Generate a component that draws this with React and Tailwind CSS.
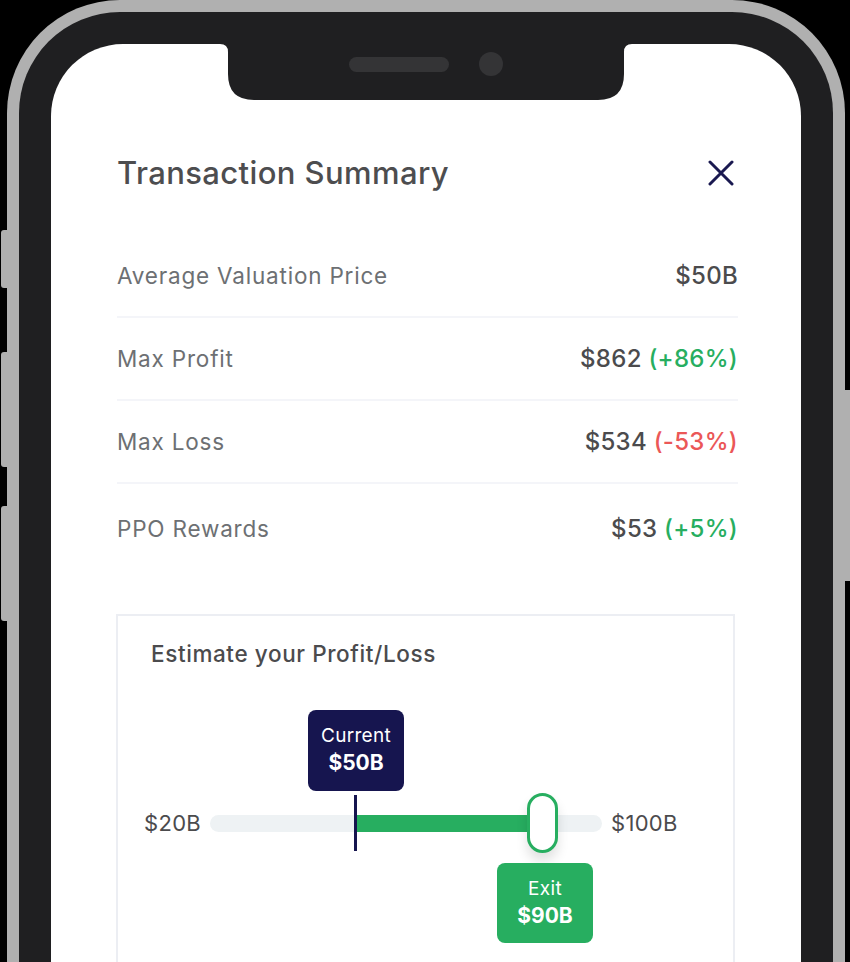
import React from 'react';

const rows = [
  { label: 'Average Valuation Price', value: '$50B' },
  { label: 'Max Profit', value: '$862', change: '(+86%)', up: true },
  { label: 'Max Loss', value: '$534', change: '(-53%)', up: false },
  { label: 'PPO Rewards', value: '$53', change: '(+5%)', up: true },
];

const SummaryRow = ({ label, value, change, up, last }) => (
  <div className={`flex items-center justify-between h-[83px] ${last ? 'pt-[6px]' : 'border-b-2 border-[#f4f5f9]'}`}>
    <span className="text-[22.5px] tracking-[0.8px] text-[#6d7073]">{label}</span>
    <span className="text-[24px] tracking-[0.3px] font-medium text-[#4b4b4d]">
      {value}
      {change && (
        <span className={up ? 'text-[#27ae60]' : 'text-[#eb5757]'}> {change}</span>
      )}
    </span>
  </div>
);

const ProfitSlider = () => (
  <div className="flex items-center h-[60px] ml-[26px]">
    <span className="w-[66px] text-[22px] tracking-[0.3px] text-[#4b4b4d]">$20B</span>
    <div className="relative flex items-center w-[392px] h-[17px] rounded-full bg-[#eef2f4]">
      {/* filled range from current to exit */}
      <div className="ml-[146px] h-[17px] w-[171px] bg-[#27ae60]" />
      <div className="w-[31px] h-[60px] shrink-0 rounded-full bg-white border-[3px] border-[#27ae60] shadow-[0_8px_12px_rgba(0,0,0,0.12)]" />

      {/* current marker + tooltip */}
      <div className="absolute left-[144px] top-[-20px] h-[56px] w-[3px] bg-[#16154f]" />
      <div className="absolute left-[98px] top-[-105px] w-[96px] h-[81px] rounded-[8px] bg-[#16154f] flex flex-col items-center justify-center text-white">
        <span className="text-[19px] tracking-[0.3px] leading-[26px]">Current</span>
        <span className="text-[21px] font-bold leading-[28px]">$50B</span>
      </div>

      {/* exit tooltip */}
      <div className="absolute left-[287px] top-[48px] w-[96px] h-[80px] rounded-[8px] bg-[#27ae60] flex flex-col items-center justify-center text-white">
        <span className="text-[19px] tracking-[0.3px] leading-[26px]">Exit</span>
        <span className="text-[21px] font-bold leading-[28px]">$90B</span>
      </div>
    </div>
    <span className="ml-[9px] text-[22px] tracking-[0.3px] text-[#4b4b4d]">$100B</span>
  </div>
);

export default function App() {
  return (
    <div className="relative w-[850px] h-[962px] overflow-hidden bg-black" style={{ fontFamily: 'Inter, "Noto Sans", sans-serif' }}>
      {/* side buttons */}
      <div className="absolute left-[1px] top-[230px] w-[10px] h-[58px] rounded-l-[3px] bg-[#b0b0b0]" />
      <div className="absolute left-[1px] top-[352px] w-[10px] h-[115px] rounded-l-[3px] bg-[#b0b0b0]" />
      <div className="absolute left-[1px] top-[506px] w-[10px] h-[115px] rounded-l-[3px] bg-[#b0b0b0]" />
      <div className="absolute right-0 top-[390px] w-[10px] h-[191px] bg-[#b0b0b0]" />

      {/* phone frame */}
      <div className="relative ml-[7px] w-[838px] h-[1200px] rounded-[113px] bg-[#b0b0b0] p-[12px]">
        <div className="w-full h-full rounded-[101px] bg-[#1f1f21] p-[32px]">
          <div className="relative w-full h-full rounded-[72px] bg-white">
            {/* notch */}
            <svg className="absolute left-[169px] top-0" width="412" height="56" viewBox="0 0 412 56">
              <path d="M0 0 H412 Q404 0 404 8 V30 Q404 56 378 56 H34 Q8 56 8 30 V8 Q8 0 0 0 Z" fill="#1f1f21" />
            </svg>
            <div className="absolute left-[298px] top-[13px] w-[100px] h-[15px] rounded-full bg-[#343436]" />
            <div className="absolute left-[428px] top-[8px] w-[24px] h-[24px] rounded-full bg-[#343436]" />

            <div className="pt-[109px] pl-[66px] pr-[63px]">
              <div className="flex items-center justify-between h-[40px]">
                <h1 className="text-[31px] tracking-[0.4px] font-medium text-[#4d4d4f]">Transaction Summary</h1>
                <svg width="26" height="26" viewBox="0 0 26 26" className="mr-[4px]">
                  <path d="M2 2 L24 24 M24 2 L2 24" stroke="#1a1950" strokeWidth="3" strokeLinecap="round" />
                </svg>
              </div>

              <div className="mt-[42px]">
                {rows.map((r, i) => (
                  <SummaryRow key={r.label} {...r} last={i === rows.length - 1} />
                ))}
              </div>

              <div className="mt-[47px] mr-[3px] -ml-[1px] border-2 border-[#eceef3] h-[400px]">
                <h2 className="pt-[24px] pl-[33px] text-[22.5px] tracking-[0.6px] font-medium text-[#4b4b4d] leading-[28px]">Estimate your Profit/Loss</h2>
                <div className="mt-[125px]">
                  <ProfitSlider />
                </div>
              </div>
            </div>
          </div>
        </div>
      </div>
    </div>
  );
}
